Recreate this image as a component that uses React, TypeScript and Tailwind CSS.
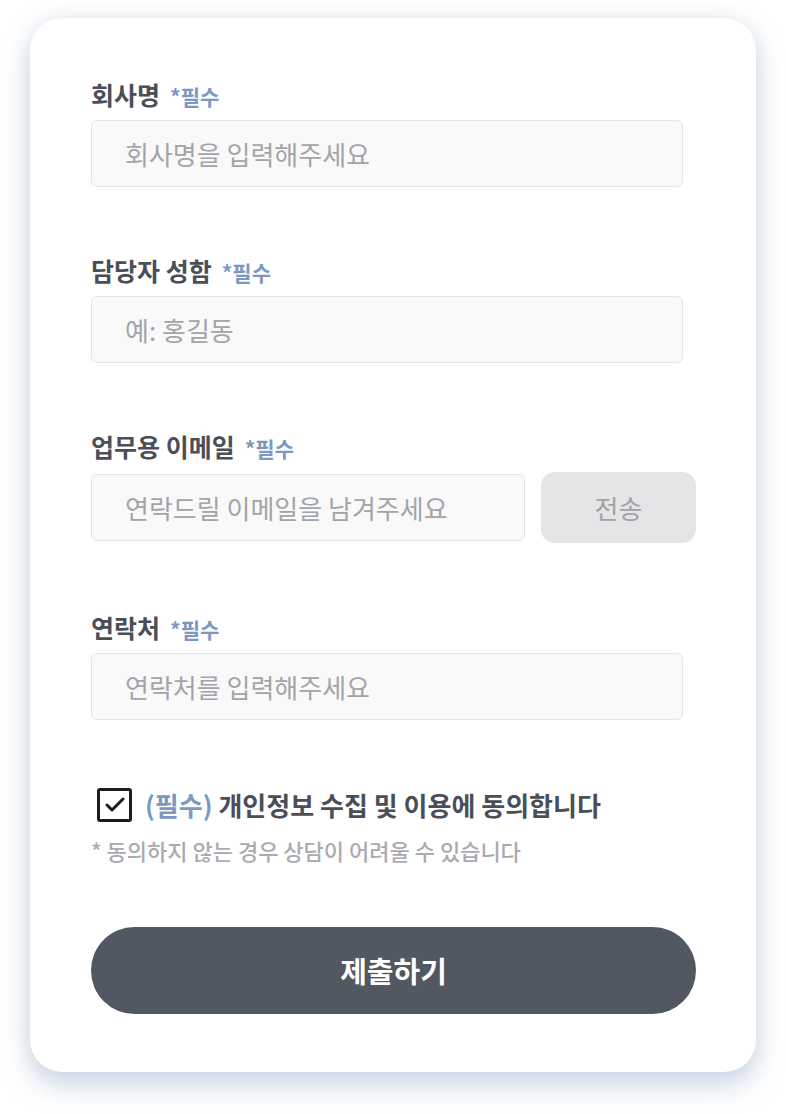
import { Check } from "lucide-react";

const font = { fontFamily: '"Noto Sans CJK KR", "Noto Sans", sans-serif' };

function Label({ text }: { text: string }) {
  return (
    <div className="flex h-[28px] items-baseline gap-[10px]">
      <span className="text-[25px] font-bold leading-[28px] text-[#4a4f57]">{text}</span>
      <span className="text-[21px] font-bold leading-[28px] text-[#7c98c0]">*필수</span>
    </div>
  );
}

function Field({ label, placeholder }: { label: string; placeholder: string }) {
  return (
    <div className="flex flex-col gap-3">
      <Label text={label} />
      <input
        placeholder={placeholder}
        className="h-[67px] w-[592px] rounded-[6px] border border-[#e4e4e6] bg-[#f9f9fa] px-[33px] text-[26px] text-[#333] outline-none placeholder:text-[#a3a4a9]"
        style={font}
      />
    </div>
  );
}

export default function App() {
  return (
    <div className="min-h-[1114px] bg-white px-[30px] pt-[18px]" style={font}>
      <div className="h-[1054px] w-[726px] rounded-[32px] bg-white pl-[61px] pr-[60px] pt-[62px] shadow-[0_14px_28px_rgba(120,150,185,0.35),0_0_20px_rgba(180,195,215,0.25)]">
        <div className="flex flex-col gap-[69px]">
          <Field label="회사명" placeholder="회사명을 입력해주세요" />
          <Field label="담당자 성함" placeholder="예: 홍길동" />
          <div className="flex flex-col gap-3">
            <Label text="업무용 이메일" />
            <div className="flex h-[71px] items-center gap-4">
              <input
                placeholder="연락드릴 이메일을 남겨주세요"
                className="h-[67px] w-[434px] rounded-[6px] border border-[#e4e4e6] bg-[#f9f9fa] px-[33px] text-[26px] text-[#333] outline-none placeholder:text-[#a3a4a9]"
                style={font}
              />
              <button
                type="button"
                className="h-[71px] w-[155px] rounded-[14px] bg-[#e5e5e7] text-[26px] text-[#a0a1a6]"
                style={font}
              >
                전송
              </button>
            </div>
          </div>
          <div className="mt-px">
            <Field label="연락처" placeholder="연락처를 입력해주세요" />
          </div>
        </div>

        <div className="mt-[68px] flex h-[34px] items-center gap-[13px] pl-[6px]">
          <div className="flex h-[34px] w-[35px] items-center justify-center rounded-[3px] border-[3px] border-[#1c1c1c]">
            <Check size={24} strokeWidth={3} className="text-[#1c1c1c]" />
          </div>
          <p className="text-[26px] font-bold leading-[28px] text-[#4a4f57]">
            <span className="text-[#7c98c0]">(필수)</span> 개인정보 수집 및 이용에 동의합니다
          </p>
        </div>
        <p className="mt-[14px] text-[22px] font-medium leading-[28px] text-[#a9abb0]">
          * 동의하지 않는 경우 상담이 어려울 수 있습니다
        </p>

        <button
          type="button"
          className="mt-[63px] h-[87px] w-[605px] rounded-full bg-[#525861] text-[29px] font-bold text-white"
          style={font}
        >
          제출하기
        </button>
      </div>
    </div>
  );
}
